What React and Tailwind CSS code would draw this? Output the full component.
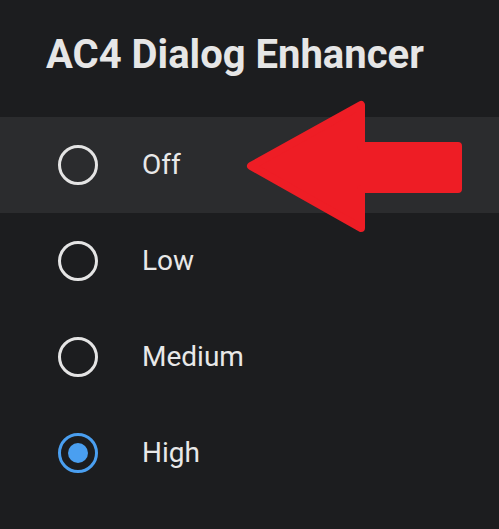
import React from 'react'

const options = [
  { label: 'Off', selected: false, highlighted: true },
  { label: 'Low', selected: false },
  { label: 'Medium', selected: false },
  { label: 'High', selected: true },
]

function Radio({ selected }) {
  if (selected) {
    return (
      <div className="size-[40px] rounded-full border-[3.5px] border-[#4a9ff0] flex items-center justify-center">
        <div className="size-[20px] rounded-full bg-[#4a9ff0]" />
      </div>
    )
  }
  return <div className="size-[40px] rounded-full border-[3px] border-[#e4e4e4]" />
}

export default function App() {
  return (
    <div className="relative w-[499px] h-[529px] bg-[#1c1d1f] overflow-hidden font-['Roboto',sans-serif]">
      <div className="h-[117px] pt-[31px] pl-[46px]">
        <h1 className="text-[40px] leading-[48px] font-bold text-[#e6e6e6]">AC4 Dialog Enhancer</h1>
      </div>

      <ul>
        {options.map((opt) => (
          <li
            key={opt.label}
            className={`h-[96px] flex items-center pl-[58px] ${opt.highlighted ? 'bg-[#2b2c2e]' : ''}`}
          >
            <Radio selected={opt.selected} />
            <span className="ml-[44px] text-[28px] leading-[28px] text-[#e8e8e8]">{opt.label}</span>
          </li>
        ))}
      </ul>

      {/* red annotation arrow pointing at "Off" */}
      <svg className="absolute left-0 top-0 pointer-events-none" width="499" height="529" viewBox="0 0 499 529">
        <polygon
          points="251,166 361,105 361,146 458,146 458,189 361,189 361,228"
          fill="#ee1d25"
          stroke="#ee1d25"
          strokeWidth="8"
          strokeLinejoin="round"
        />
      </svg>
    </div>
  )
}
